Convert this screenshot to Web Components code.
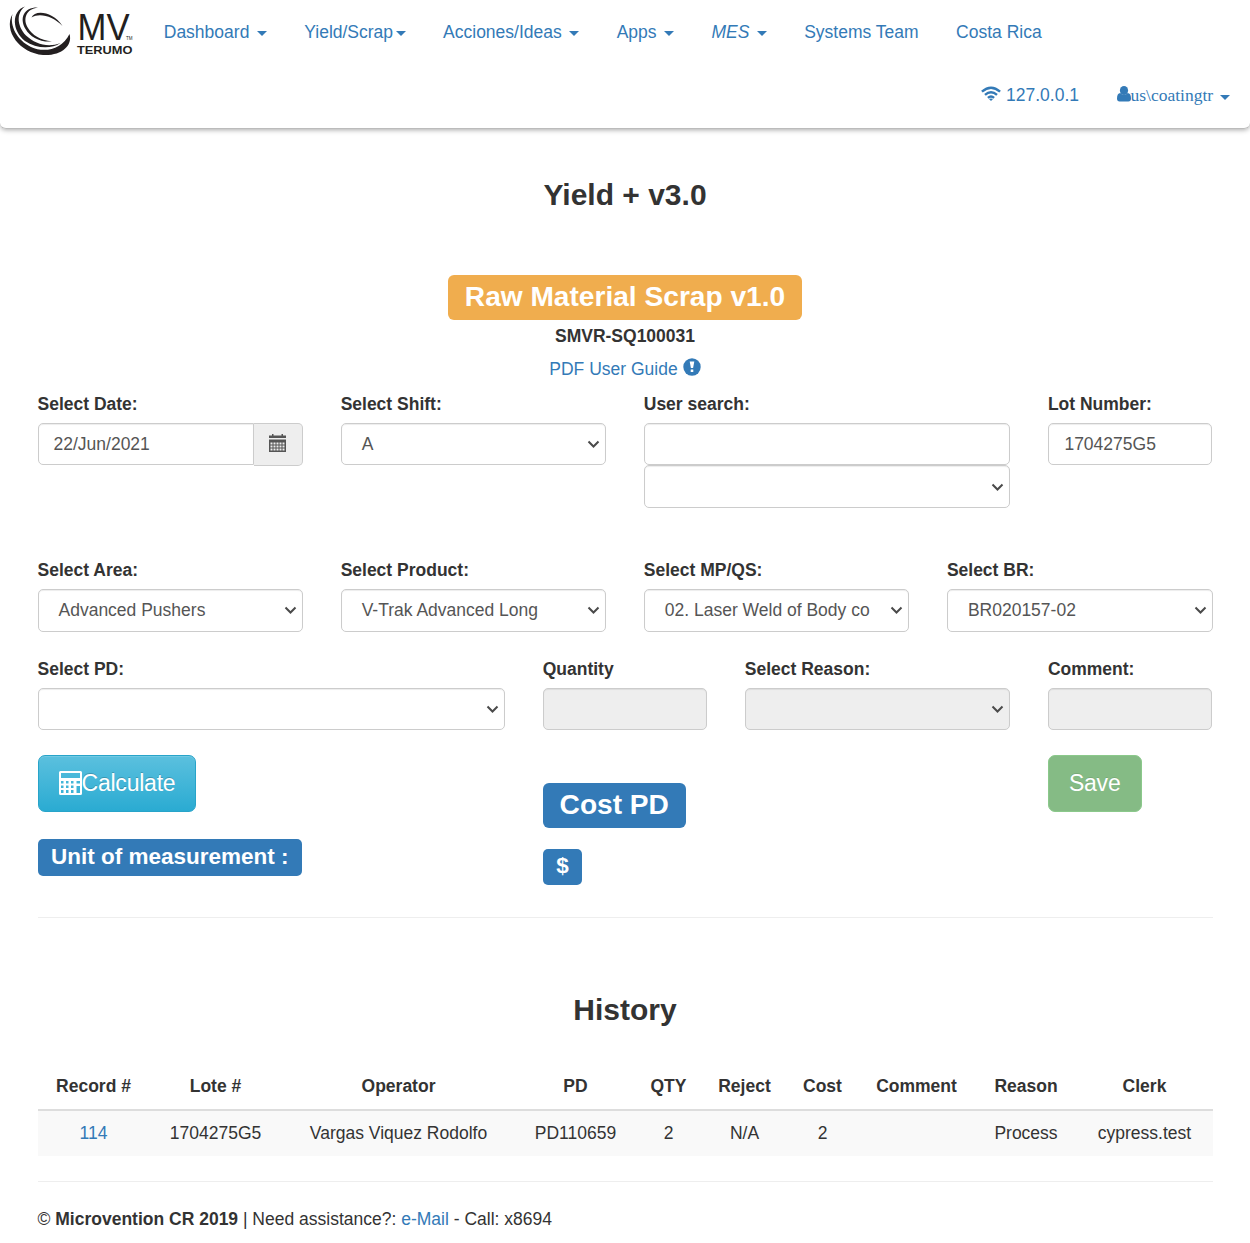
<!DOCTYPE html>
<html lang="en">
<head>
<meta charset="utf-8">
<title>Yield + v3.0</title>
<style>
body{margin:0;background:#fff;color:#333;font:17.5px/25px "Liberation Sans",Arial,sans-serif}
</style>
</head>
<body>
<scrap-app></scrap-app>
<script>
function define(name, html){
  const t=document.createElement('template');
  t.innerHTML=html;
  customElements.define(name,class extends HTMLElement{
    constructor(){super();this.attachShadow({mode:'open'}).append(t.content.cloneNode(true));}
  });
}

define('brand-logo',`<style>:host{display:block;width:145px;height:62px}svg{display:block}</style>
<svg width="145" height="62" viewBox="0 0 145 62">
<g fill="#231f20">
<path d="M12.500 14C9.500 26 17 40 31 47C44 53 62 50 69.500 34C73 46 61 56 43 55C20 53 3 31 12.500 14Z"/>
<path d="M25 6.500C16 13 17 26 26 35.500C35 44 48 48 60.500 43C51 49.500 36 48.500 25 41C12 31 11 11 25 6.500Z"/>
<path d="M38 7.500C26 9 22.500 19 28 28C32 35 40 40 52 41.500C40 42.500 30 37 25.500 29C19 18 24 7 38 7.500Z"/>
<path d="M31.500 17.500C35 9.500 53 11.500 62.500 26C53 16.500 40 12.500 31.500 17.500Z"/>
<text x="77.500" y="40" font-family="Liberation Sans" font-size="37.500" textLength="52" lengthAdjust="spacingAndGlyphs">MV</text>
<text x="126" y="40" font-family="Liberation Sans" font-size="4.500" textLength="6.500" lengthAdjust="spacingAndGlyphs">TM</text>
<text x="77" y="54" font-family="Liberation Sans" font-weight="bold" font-size="10" textLength="55.500" lengthAdjust="spacingAndGlyphs">TERUMO</text>
</g></svg>`);

define('nav-link',`<style>
:host{display:block;padding:19.500px 18.750px 18px;line-height:25px;color:#337ab7;white-space:nowrap}
.caret{display:none;vertical-align:middle;margin-left:2.500px;border-top:5px solid;border-left:5px solid transparent;border-right:5px solid transparent;transform:translateY(1px)}
:host([menu]) .caret{display:inline-block}
::slotted(svg){vertical-align:-1px}
</style><slot></slot><span class="caret"></span>`);

define('top-bar',`<style>
:host{display:block;height:128px;border-bottom:1px solid #bbb;border-radius:0 0 6px 6px;box-shadow:0 1px 5px rgba(0,0,0,.34);box-sizing:border-box}
:host{height:129px}
.row{display:flex;height:63px}
.right{justify-content:flex-end;padding-right:1.250px}
em{font-style:italic}
.serif{font-family:"Liberation Serif",serif}
</style>
<div class="row"><brand-logo></brand-logo>
<nav-link menu>Dashboard&nbsp;</nav-link><nav-link menu>Yield/Scrap</nav-link><nav-link menu>Acciones/Ideas&nbsp;</nav-link><nav-link menu>Apps&nbsp;</nav-link><nav-link menu><em>MES&nbsp;</em></nav-link><nav-link>Systems Team</nav-link><nav-link>Costa Rica</nav-link></div>
<div class="row right">
<nav-link><svg width="20" height="16" viewBox="0 0 20 16" fill="none" stroke="#337ab7" stroke-width="2.400"><path d="M.9 5.700Q10-2.400 19.100 5.700M4 8.900Q10 3.600 16 8.900M6.900 11.900Q10 9.200 13.100 11.900"/><path d="M8 13Q10 11.800 12 13L10 15Z" fill="#337ab7" stroke="none"/></svg> 127.0.0.1</nav-link>
<nav-link menu class="serif"><svg width="14" height="16" viewBox="0 0 14 16" fill="#337ab7"><ellipse cx="7" cy="4.500" rx="4.100" ry="4.500"/><path d="M3.300 7Q7 10.800 10.700 7Q14 7.400 14 12.600Q14 15.500 11.400 15.500H2.600Q0 15.500 0 12.600Q0 7.400 3.300 7Z"/></svg>us\\coatingtr&nbsp;</nav-link></div>`);

define('tag-label',`<style>
:host{display:flex;width:max-content;box-sizing:border-box;align-items:center;justify-content:center;color:#fff;background:#337ab7;font-weight:bold;border-radius:5px;line-height:1}
:host([size=lg]){font-size:28.125px;height:45px;padding:0 16.875px;border-radius:6px}
:host([size=md]){font-size:22.500px;height:37px;padding:0 13.500px}
:host([warn]){background:#f0ad4e}
</style><slot></slot>`);

define('form-field',`<style>
:host{display:block;padding:0 18.750px;min-width:0}
label{display:block;font-weight:bold;margin-bottom:6.250px}
:host([span="2"]){grid-column:span 2}:host([span="3"]){grid-column:span 3}:host([span="4"]){grid-column:span 4}:host([span="5"]){grid-column:span 5}
</style><label><slot name="label"></slot></label><slot></slot>`);

define('text-box',`<style>
:host{display:block;box-sizing:border-box;height:42.500px;border:1px solid #ccc;border-radius:5px;padding:8px 15.500px 7px;color:#555;background:#fff;box-shadow:inset 0 1px 1px rgba(0,0,0,.075);white-space:nowrap;overflow:hidden}
:host([disabled]){background:#eee}
:host([joined]){flex:1;border-radius:5px 0 0 5px;padding-left:15px}
</style><slot></slot>`);

define('select-box',`<style>
:host{display:flex;justify-content:space-between;box-sizing:border-box;height:42.500px;border:1px solid #ccc;border-radius:5px;padding:8px 5px 7px 20px;color:#555;background:#fff;box-shadow:inset 0 1px 1px rgba(0,0,0,.075);white-space:nowrap}
:host([disabled]){background:#eee}
svg{flex:none;margin-top:8.500px}
</style><span><slot></slot></span>
<svg width="13" height="9" viewBox="0 0 13 9" fill="none" stroke="#4a4a4a" stroke-width="2"><path d="M1.500 1.500L6.500 6.500L11.500 1.500"/></svg>`);

define('date-picker',`<style>
:host{display:flex}
.addon{box-sizing:border-box;width:49px;height:43px;border:1px solid #ccc;border-left:0;border-radius:0 5px 5px 0;background:#eee;display:flex;align-items:center;justify-content:center}
svg{margin:-3px 1px 0 0}
</style><text-box joined><slot></slot></text-box><span class="addon">
<svg width="17" height="18" viewBox="0 0 17 18" fill="#555"><path d="M0 1.500H3V0H4.500V1.500H12.500V0H14V1.500H17V4H0Z"/><path fill-rule="evenodd" d="M0 5.500H17V18H0ZM1.500 8.500V10.500H3.500V8.500ZM4.500 8.500V10.500H6.500V8.500ZM7.500 8.500V10.500H9.500V8.500ZM10.500 8.500V10.500H12.500V8.500ZM13.500 8.500V10.500H15.500V8.500ZM1.500 11.500V13.500H3.500V11.500ZM4.500 11.500V13.500H6.500V11.500ZM7.500 11.500V13.500H9.500V11.500ZM10.500 11.500V13.500H12.500V11.500ZM13.500 11.500V13.500H15.500V11.500ZM1.500 14.500V16.500H3.500V14.500ZM4.500 14.500V16.500H6.500V14.500ZM7.500 14.500V16.500H9.500V14.500ZM10.500 14.500V16.500H12.500V14.500ZM13.500 14.500V16.500H15.500V14.500Z"/></svg></span>`);

define('action-button',`<style>
:host{display:flex;width:max-content;box-sizing:border-box;height:57px;align-items:center;padding:0 20px;font-size:23px;letter-spacing:-.22px;border:1px solid #28a4c9;border-radius:7px;color:#fff;background:linear-gradient(#5bc0de,#2aabd2);text-shadow:0 -1px 0 rgba(0,0,0,.2);box-shadow:inset 0 1px 0 rgba(255,255,255,.15)}
:host([save]){padding-right:21px;background:#85bb85;border-color:#8bc98b;box-shadow:none;text-shadow:0 -1px 0 rgba(0,0,0,.1)}
</style><slot></slot>`);

define('entry-form',`<style>
:host{display:block;padding:0 18.750px}
.row{display:grid;grid-template-columns:repeat(12,minmax(0,1fr))}
.r1{height:166px}.r2{height:99px}.r3{height:98px}
.r2 select-box{height:43px}
.r4{height:162px}
.a,.b,.c{padding:0 18.750px}
.a,.b{grid-column:span 5}.c{grid-column:span 2}
.a tag-label{margin-top:27px}
.b{padding-top:28px}
.b tag-label+tag-label{margin-top:21px;height:36px}
</style>
<div class="row r1">
<form-field span="3"><span slot="label">Select Date:</span><date-picker>22/Jun/2021</date-picker></form-field>
<form-field span="3"><span slot="label">Select Shift:</span><select-box>A</select-box></form-field>
<form-field span="4"><span slot="label">User search:</span><text-box></text-box><select-box></select-box></form-field>
<form-field span="2"><span slot="label">Lot Number:</span><text-box>1704275G5</text-box></form-field>
</div>
<div class="row r2">
<form-field span="3"><span slot="label">Select Area:</span><select-box>Advanced Pushers</select-box></form-field>
<form-field span="3"><span slot="label">Select Product:</span><select-box>V-Trak Advanced Long</select-box></form-field>
<form-field span="3"><span slot="label">Select MP/QS:</span><select-box>02. Laser Weld of Body co</select-box></form-field>
<form-field span="3"><span slot="label">Select BR:</span><select-box>BR020157-02</select-box></form-field>
</div>
<div class="row r3">
<form-field span="5"><span slot="label">Select PD:</span><select-box></select-box></form-field>
<form-field span="2"><span slot="label">Quantity</span><text-box disabled></text-box></form-field>
<form-field span="3"><span slot="label">Select Reason:</span><select-box disabled></select-box></form-field>
<form-field span="2"><span slot="label">Comment:</span><text-box disabled></text-box></form-field>
</div>
<div class="row r4">
<div class="a"><action-button><svg width="23" height="24" viewBox="0 0 23 24" fill="#fff"><path fill-rule="evenodd" d="M1.500 0H21.500Q23 0 23 1.500V22.500Q23 24 21.500 24H1.500Q0 24 0 22.500V1.500Q0 0 1.500 0ZM2 2V7H21V2ZM2 10V12.500H4.500V10ZM7 10V12.500H9.500V10ZM12 10V12.500H14.500V10ZM17.500 10V12.500H21V10ZM2 14.500V17H4.500V14.500ZM7 14.500V17H9.500V14.500ZM12 14.500V17H14.500V14.500ZM17.500 15V22H21V15ZM2 19V22H4.500V19ZM7 19V22H9.500V19ZM12 19V22H14.500V19Z"/></svg>Calculate</action-button><tag-label size="md">Unit of measurement :</tag-label></div>
<div class="b"><tag-label size="lg">Cost PD</tag-label><tag-label size="md">$</tag-label></div>
<div class="c"><action-button save>Save</action-button></div>
</div>`);

define('history-table',`<style>
:host{display:block}
table{width:100%;border-collapse:collapse;table-layout:fixed;text-align:center}
th{height:44px;padding:2px 0 0;border-bottom:2px solid #ddd}
td{height:45px;padding:0;background:#f9f9f9}
a{color:#337ab7}
</style>
<table><colgroup><col style="width:112px"><col style="width:132px"><col style="width:234px"><col style="width:120px"><col style="width:66px"><col style="width:86px"><col style="width:70px"><col style="width:118px"><col style="width:101px"><col style="width:136px"></colgroup>
<thead><tr><th>Record #</th><th>Lote #</th><th>Operator</th><th>PD</th><th>QTY</th><th>Reject</th><th>Cost</th><th>Comment</th><th>Reason</th><th>Clerk</th></tr></thead>
<tbody><tr><td><a>114</a></td><td>1704275G5</td><td>Vargas Viquez Rodolfo</td><td>PD110659</td><td>2</td><td>N/A</td><td>2</td><td></td><td>Process</td><td>cypress.test</td></tr></tbody></table>`);

define('scrap-app',`<style>
:host{display:block;height:1243px;overflow:hidden}
h3{margin:0;font-size:30px;line-height:33px;text-align:center}
.title{margin-top:49px}
.intro{display:flex;flex-direction:column;align-items:center;margin-top:64px;height:116.500px}
.intro b{margin-top:4px}
.guide{display:flex;gap:5px;align-items:center;margin-top:8px;color:#337ab7}
.guide svg{margin-top:-5px}
hr{border:0;border-top:1px solid #eee;margin:0 37.500px}
.hist{margin-top:75px}
history-table{margin:37px 37.500px 25px}
footer{margin:25px 37.500px 0;color:#333}
footer a{color:#337ab7}
</style>
<top-bar></top-bar>
<h3 class="title">Yield + v3.0</h3>
<div class="intro"><tag-label size="lg" warn>Raw Material Scrap v1.0</tag-label><b>SMVR-SQ100031</b>
<div class="guide">PDF User Guide <svg width="18" height="18" viewBox="0 0 18 18"><circle cx="9" cy="9" r="8.700" fill="#337ab7"/><path d="M6.700 3.500H11.300L10.100 10H7.900ZM7.700 11.500H10.300V14H7.700Z" fill="#fff"/></svg></div></div>
<entry-form></entry-form>
<hr>
<h3 class="hist">History</h3>
<history-table></history-table>
<hr>
<footer>© <b>Microvention CR 2019</b> | Need assistance?: <a>e-Mail</a> - Call: x8694</footer>`);
</script>
</body>
</html>
